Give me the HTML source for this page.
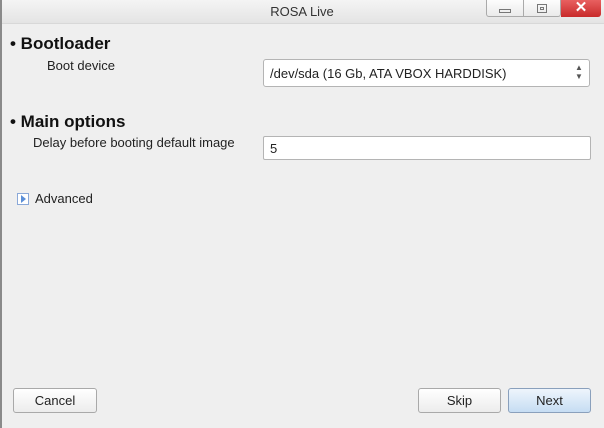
<!DOCTYPE html>
<html><head><style>
*{margin:0;padding:0;box-sizing:border-box}
body{width:604px;height:428px;background:#efefef;font-family:"Liberation Sans",sans-serif;font-size:13px;color:#222;position:relative;overflow:hidden}
.a{position:absolute}
.btn{position:absolute;height:25px;border:1px solid #a9a9a9;border-radius:3px;background:linear-gradient(#fff,#ececec);text-align:center;line-height:23px;font-size:13px}
</style></head><body>
<div class="a" style="left:0;top:0;width:604px;height:24px;background:linear-gradient(#f4f4f4,#e4e4e4);border-bottom:1px solid #d8d8d8"></div>
<div class="a" style="left:0;top:0;width:2px;height:428px;background:#8a8a8a"></div>
<div class="a" style="left:0;top:4px;width:604px;text-align:center;font-size:13px;color:#333">ROSA Live</div>
<div class="a" style="left:486px;top:0;width:75px;height:17px;border:1px solid #aaa;border-top:none;border-radius:0 0 3px 3px;background:linear-gradient(#fdfdfd,#eaeaea)"></div>
<div class="a" style="left:523px;top:0;width:1px;height:17px;background:#aaa"></div>
<div class="a" style="left:499px;top:9px;width:12px;height:4px;border:1px solid #777"></div>
<div class="a" style="left:537px;top:4px;width:10px;height:9px;border:1px solid #777"></div>
<div class="a" style="left:540px;top:7px;width:4px;height:3px;border:1px solid #777"></div>
<div class="a" style="left:561px;top:0;width:40px;height:17px;background:linear-gradient(#e86060,#c82a2a);border-radius:0 0 3px 0;color:#fff;font-weight:bold;text-align:center;line-height:16px;font-size:15px">✕</div>
<div class="a" style="left:10px;top:34px;font-size:17px;font-weight:bold;color:#111">• Bootloader</div>
<div class="a" style="left:47px;top:58px">Boot device</div>
<div class="a" style="left:263px;top:59px;width:327px;height:28px;border:1px solid #b4b4b4;border-radius:3px;background:#fff;padding:6px 0 0 6px">/dev/sda (16 Gb, ATA VBOX HARDDISK)</div>
<div class="a" style="left:575px;top:63px;font-size:8px;line-height:9px;color:#555">▲<br>▼</div>
<div class="a" style="left:10px;top:112px;font-size:17px;font-weight:bold;color:#111">• Main options</div>
<div class="a" style="left:33px;top:135px">Delay before booting default image</div>
<div class="a" style="left:263px;top:136px;width:328px;height:24px;border:1px solid #b4b4b4;border-radius:2px;background:#fff;padding:4px 0 0 6px">5</div>
<div class="a" style="left:17px;top:193px;width:12px;height:12px;border:1px solid #8aa8d8;background:#fff"></div>
<div class="a" style="left:21px;top:195px;width:0;height:0;border-left:5px solid #5b8fd8;border-top:4px solid transparent;border-bottom:4px solid transparent"></div>
<div class="a" style="left:35px;top:191px">Advanced</div>
<div class="btn" style="left:13px;top:388px;width:84px">Cancel</div>
<div class="btn" style="left:418px;top:388px;width:83px">Skip</div>
<div class="btn" style="left:508px;top:388px;width:83px;background:linear-gradient(#eef5fc,#c6ddf3);border-color:#8aa0bc">Next</div>
</body></html>
